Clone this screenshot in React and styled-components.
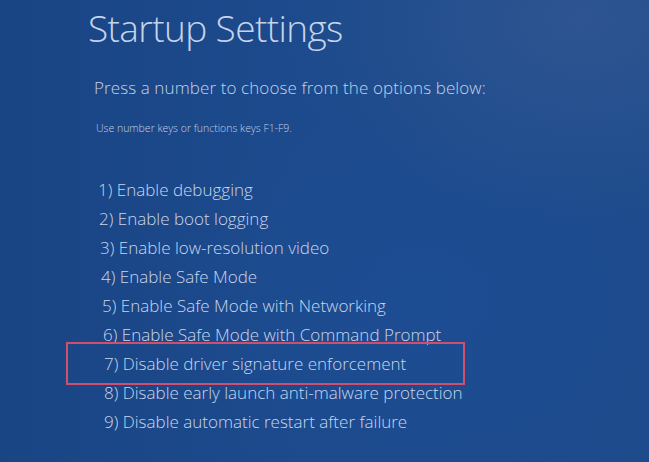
import React from "react";
import styled, { createGlobalStyle } from "styled-components";

const Global = createGlobalStyle`
  html, body {
    margin: 0;
    padding: 0;
    height: 100%;
  }
  body {
    background: #1b4887;
    font-family: "Open Sans", "Noto Sans", "Liberation Sans", sans-serif;
    -webkit-font-smoothing: antialiased;
  }
`;

const Screen = styled.main`
  box-sizing: border-box;
  width: 649px;
  height: 462px;
  overflow: hidden;
  padding: 3px 0 0 88px;
  color: #c9d7ec;
  background:
    radial-gradient(ellipse 420px 300px at 580px 20px, rgba(70, 100, 150, 0.4), rgba(70, 100, 150, 0) 70%),
    radial-gradient(ellipse 360px 260px at 420px 300px, rgba(30, 80, 160, 0.35), rgba(30, 80, 160, 0) 75%),
    linear-gradient(90deg, #1a4585 0%, #1c4a8c 45%, #1d4b8c 100%);
`;

const Title = styled.h1`
  margin: 0;
  font-weight: 300;
  font-size: 37px;
  line-height: 50px;
  letter-spacing: -0.6px;
  color: #c6d4ea;
`;

const Prompt = styled.p`
  margin: 24px 0 0 6px;
  font-weight: 300;
  font-size: 17px;
  line-height: 22px;
  letter-spacing: 0.1px;
  color: #c3d2e8;
`;

const Hint = styled.p`
  margin: 22px 0 0 8px;
  font-weight: 300;
  font-size: 10.5px;
  line-height: 14px;
  color: #c0cfe6;
`;

const Options = styled.ol`
  list-style: none;
  margin: 40px 0 0 10px;
  padding: 0;
`;

const Option = styled.li`
  position: relative;
  font-weight: 300;
  font-size: 17px;
  line-height: 29px;
  padding-left: ${(p) => p.$shift}px;
  color: #c8d6ec;

  ${(p) =>
    p.$marked &&
    `
    &::before {
      content: "";
      position: absolute;
      left: -32px;
      top: -7px;
      width: 395px;
      height: 39px;
      border: 2px solid #cf4f6c;
      pointer-events: none;
    }
  `}
`;

const options = [
  "1) Enable debugging",
  "2) Enable boot logging",
  "3) Enable low-resolution video",
  "4) Enable Safe Mode",
  "5) Enable Safe Mode with Networking",
  "6) Enable Safe Mode with Command Prompt",
  "7) Disable driver signature enforcement",
  "8) Disable early launch anti-malware protection",
  "9) Disable automatic restart after failure",
];

export default function App() {
  return (
    <>
      <Global />
      <Screen>
        <Title>Startup Settings</Title>
        <Prompt>Press a number to choose from the options below:</Prompt>
        <Hint>Use number keys or functions keys F1-F9.</Hint>
        <Options>
          {options.map((text, i) => (
            <Option key={text} $shift={Math.min(i, 6)} $marked={i === 6}>
              {text}
            </Option>
          ))}
        </Options>
      </Screen>
    </>
  );
}
